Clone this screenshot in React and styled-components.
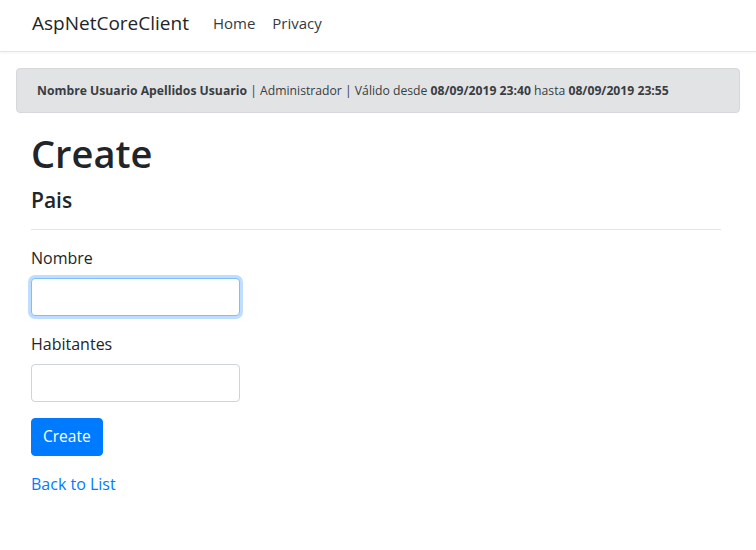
import React from "react";
import styled, { createGlobalStyle } from "styled-components";

const GlobalStyle = createGlobalStyle`
  html, body {
    margin: 0;
    padding: 0;
    background: #fff;
  }
  body {
    font-family: "Segoe UI", "Open Sans", "Noto Sans", "Liberation Sans", sans-serif;
    font-size: 16px;
    line-height: 1.5;
    color: #212529;
  }
  * {
    box-sizing: border-box;
  }
`;

const App = () => {
  return (
    <>
      <GlobalStyle />
      <Navbar>
        <Brand href="#">AspNetCoreClient</Brand>
        <NavLinks>
          <NavLink href="#">Home</NavLink>
          <NavLink href="#">Privacy</NavLink>
        </NavLinks>
      </Navbar>
      <Page>
        <InfoBar>
          <b>Nombre Usuario Apellidos Usuario</b> | Administrador | Válido desde{" "}
          <b>08/09/2019 23:40</b> hasta <b>08/09/2019 23:55</b>
        </InfoBar>
        <Content>
          <Title>Create</Title>
          <Subtitle>Pais</Subtitle>
          <Rule />
          <Form onSubmit={(e) => e.preventDefault()}>
            <Group>
              <Label htmlFor="nombre">Nombre</Label>
              <Input id="nombre" type="text" autoFocus focused />
            </Group>
            <Group>
              <Label htmlFor="habitantes">Habitantes</Label>
              <Input id="habitantes" type="text" />
            </Group>
            <Button type="submit">Create</Button>
          </Form>
          <BackLink href="#">Back to List</BackLink>
        </Content>
      </Page>
    </>
  );
};

export default App;

const Navbar = styled.nav`
  display: flex;
  align-items: center;
  height: 52px;
  padding: 0 32px;
  border-bottom: 1px solid #e5e5e5;
  box-shadow: 0 1px 3px rgba(0, 0, 0, 0.05);
`;

const Brand = styled.a`
  font-size: 19px;
  color: #212529;
  text-decoration: none;
  margin-right: 24px;
  margin-top: -4px;
`;

const NavLinks = styled.div`
  display: flex;
  gap: 17px;
  margin-top: -4px;
`;

const NavLink = styled.a`
  font-size: 15px;
  color: #343a40;
  text-decoration: none;
`;

const Page = styled.main`
  padding: 16px 16px 0;
`;

const InfoBar = styled.div`
  background: #e2e3e5;
  border: 1px solid #d6d8db;
  border-radius: 4px;
  color: #383d41;
  font-size: 12.2px;
  padding: 12px 20px;
  line-height: 19px;
  margin-bottom: 18px;

  b {
    font-weight: 700;
  }
`;

const Content = styled.div`
  padding: 0 19px 0 15px;
`;

const Title = styled.h1`
  font-size: 38px;
  font-weight: 600;
  line-height: 1.2;
  margin: 0 0 11px;
`;

const Subtitle = styled.h4`
  font-size: 21px;
  font-weight: 600;
  line-height: 1.2;
  margin: 0 0 8px;
`;

const Rule = styled.hr`
  border: 0;
  border-top: 1px solid rgba(0, 0, 0, 0.1);
  margin: 16px 0 16px;
`;

const Form = styled.form`
  width: 209px;
`;

const Group = styled.div`
  margin-bottom: 16px;
`;

const Label = styled.label`
  display: inline-block;
  margin-bottom: 8px;
`;

const Input = styled.input`
  display: block;
  width: 100%;
  height: 38px;
  padding: 6px 12px;
  font: inherit;
  color: #495057;
  border: 1px solid ${(p) => (p.focused ? "#80bdff" : "#ced4da")};
  border-radius: 4px;
  box-shadow: ${(p) => (p.focused ? "0 0 0 3px rgba(0, 123, 255, 0.25)" : "none")};
  outline: none;

  &:focus {
    border-color: #80bdff;
    box-shadow: 0 0 0 3px rgba(0, 123, 255, 0.25);
  }
`;

const Button = styled.button`
  font: inherit;
  font-size: 15.5px;
  color: #fff;
  background: #007bff;
  border: 1px solid #007bff;
  border-radius: 4px;
  padding: 6px 11px;
  height: 38px;
  cursor: pointer;
`;

const BackLink = styled.a`
  display: inline-block;
  margin-top: 16px;
  color: #007bff;
  text-decoration: none;
`;
